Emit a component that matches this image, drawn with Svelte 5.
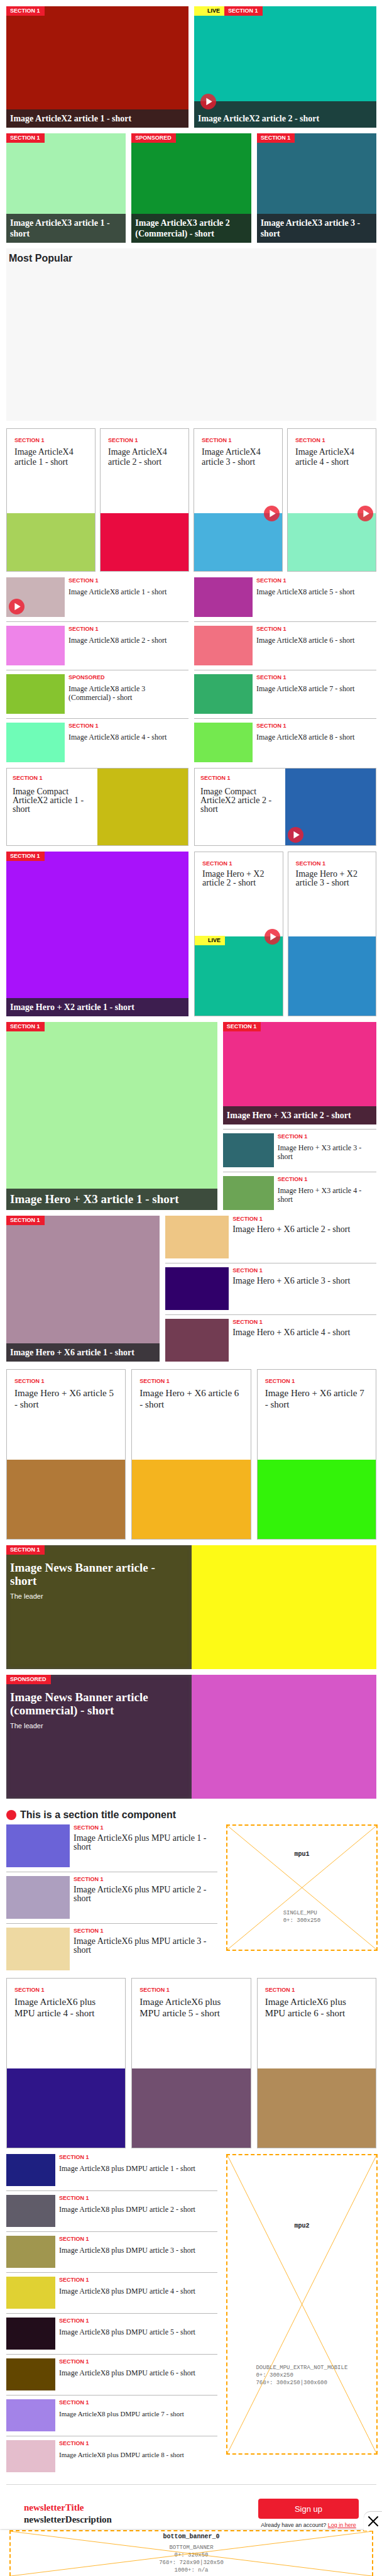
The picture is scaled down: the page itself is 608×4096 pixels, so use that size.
<script>
  const S = 'SECTION 1';
  const SP = 'SPONSORED';

  const x2 = [
    { tag: S, title: 'Image ArticleX2 article 1 - short', color: '#a31607' },
    { tag: S, title: 'Image ArticleX2 article 2 - short', color: '#07bda5', live: true, play: true }
  ];
  const x3 = [
    { tag: S, title: 'Image ArticleX3 article 1 - short', color: '#a6f2b0' },
    { tag: SP, title: 'Image ArticleX3 article 2 (Commercial) - short', color: '#0d942e' },
    { tag: S, title: 'Image ArticleX3 article 3 - short', color: '#276b7e' }
  ];
  const x4 = ['#a8d25a', '#e90b40', '#48b1dd', '#89efc3'].map((color, i) => ({
    tag: S, title: `Image ArticleX4 article ${i + 1} - short`, color, play: i > 1
  }));
  const x8 = ['#cab3b7', '#ee84e9', '#86c42f', '#6ffcb7', '#ad339b', '#f17181', '#32ad68', '#74e94f'].map(
    (color, i) => ({
      tag: i === 2 ? SP : S,
      title: `Image ArticleX8 article ${i + 1}${i === 2 ? ' (Commercial)' : ''} - short`,
      color,
      play: i === 0
    })
  );
  const compact = ['#c7bc14', '#2864ae'].map((color, i) => ({
    tag: S, title: `Image Compact ArticleX2 article ${i + 1} - short`, color, play: i === 1
  }));
  const heroX2 = ['#a812fa', '#0dbc95', '#2c8ac6'].map((color, i) => ({
    tag: S, title: `Image Hero + X2 article ${i + 1} - short`, color, play: i === 1, live: i === 1
  }));
  const heroX3 = ['#aaf2a1', '#ee2d89', '#2e6870', '#6ca455'].map((color, i) => ({
    tag: S, title: `Image Hero + X3 article ${i + 1} - short`, color
  }));
  const heroX6 = ['#ac8a9f', '#eec685', '#30006a', '#723c52', '#b17938', '#f4b41f', '#33f309'].map((color, i) => ({
    tag: S, title: `Image Hero + X6 article ${i + 1} - short`, color
  }));
  const banners = [
    { tag: S, title: 'Image News Banner article - short', color: '#fdfa16' },
    { tag: SP, title: 'Image News Banner article (commercial) - short', color: '#d657c8' }
  ];
  const mpu = ['#6b63d7', '#ad9fbf', '#eed9a2', '#2f1589', '#714f6f', '#b18b59'].map((color, i) => ({
    tag: S, title: `Image ArticleX6 plus MPU article ${i + 1} - short`, color
  }));
  const dmpu = ['#1e2081', '#605c69', '#a0964f', '#e0d133', '#220d1b', '#624600', '#a383e8', '#e4bdcc'].map(
    (color, i) => ({ tag: S, title: `Image ArticleX8 plus DMPU article ${i + 1} - short`, color, fine: i > 5 })
  );
</script>

{#snippet playIcon()}
  <svg class="play" viewBox="0 0 32 32" aria-hidden="true">
    <circle cx="16" cy="16" r="16" fill="#ed1c2e" fill-opacity="0.8" />
    <path d="M12 8.5 L24 16 L12 23.5 Z" fill="#fff" />
  </svg>
{/snippet}

{#snippet poster(a, cls = '')}
  <article class="poster {cls}" style:background-color={a.color}>
    <div class="badges">
      {#if a.live}<span class="badge live">LIVE</span>{/if}
      <span class="badge">{a.tag}</span>
    </div>
    <div class="caption" class:with-play={a.play}>
      {#if a.play}{@render playIcon()}{/if}
      <h3><a href="#article">{a.title}</a></h3>
    </div>
  </article>
{/snippet}

{#snippet card(a, cls = '')}
  <article class="card {cls}">
    <div class="card-body">
      <span class="kicker">{a.tag}</span>
      <h3><a href="#article">{a.title}</a></h3>
    </div>
    <div class="picture" style:background-color={a.color}>
      {#if a.live}<span class="badge live">LIVE</span>{/if}
      {#if a.play}{@render playIcon()}{/if}
    </div>
  </article>
{/snippet}

{#snippet row(a)}
  <li class="row" class:fine={a.fine}>
    <div class="thumb" style:background-color={a.color}>
      {#if a.play}{@render playIcon()}{/if}
    </div>
    <div class="row-body">
      <span class="kicker">{a.tag}</span>
      <h3><a href="#article">{a.title}</a></h3>
    </div>
  </li>
{/snippet}

{#snippet ad(name, lines, cls)}
  <aside class="ad {cls}">
    <svg class="cross" viewBox="0 0 100 100" preserveAspectRatio="none" aria-hidden="true">
      <path d="M0 0 L100 100 M100 0 L0 100" vector-effect="non-scaling-stroke" />
    </svg>
    <strong>{name}</strong>
    <div class="sizes">
      {#each lines as line}<div>{line}</div>{/each}
    </div>
  </aside>
{/snippet}

<main>
  <section class="cols two x2">
    {#each x2 as a}{@render poster(a)}{/each}
  </section>

  <section class="cols three x3">
    {#each x3 as a}{@render poster(a)}{/each}
  </section>

  <section class="popular">
    <h2>Most Popular</h2>
  </section>

  <section class="cols four roomy">
    {#each x4 as a}{@render card(a, 'small')}{/each}
  </section>

  <section class="cols two">
    <ul class="list x8">
      {#each x8.slice(0, 4) as a}{@render row(a)}{/each}
    </ul>
    <ul class="list x8">
      {#each x8.slice(4) as a}{@render row(a)}{/each}
    </ul>
  </section>

  <section class="cols two">
    {#each compact as a}
      <article class="compact">
        <div class="compact-body">
          <span class="kicker">{a.tag}</span>
          <h3><a href="#article">{a.title}</a></h3>
        </div>
        <div class="compact-picture" style:background-color={a.color}>
          {#if a.play}{@render playIcon()}{/if}
        </div>
      </article>
    {/each}
  </section>

  <section class="cols two hero-x2">
    {@render poster(heroX2[0])}
    <div class="pair">
      {@render card(heroX2[1], 'tight')}
      {@render card(heroX2[2], 'tight')}
    </div>
  </section>

  <section class="cols wide-left">
    {@render poster(heroX3[0], 'large')}
    <div class="stack">
      {@render poster(heroX3[1], 'top')}
      <ul class="list x3-list">
        {#each heroX3.slice(2) as a}{@render row(a)}{/each}
      </ul>
    </div>
  </section>

  <section class="cols wide-right">
    {@render poster(heroX6[0])}
    <ul class="list x6-list">
      {#each heroX6.slice(1, 4) as a}{@render row(a)}{/each}
    </ul>
  </section>

  <section class="cols three roomy">
    {#each heroX6.slice(4) as a}{@render card(a, 'medium')}{/each}
  </section>

  {#each banners as a}
    <article class="banner" style:background-color={a.color}>
      <div class="banner-text">
        <div class="badges"><span class="badge">{a.tag}</span></div>
        <div class="banner-copy">
          <h3><a href="#article">{a.title}</a></h3>
          <p>The leader</p>
        </div>
      </div>
    </article>
  {/each}

  <section class="titled">
    <h2 class="section-title"><span class="dot"></span>This is a section title component</h2>
    <div class="cols wide-left">
      <ul class="list x6-list">
        {#each mpu.slice(0, 3) as a}{@render row(a)}{/each}
      </ul>
      {@render ad('mpu1', ['SINGLE_MPU', '0+: 300x250'], 'single')}
    </div>
  </section>

  <section class="cols three roomy">
    {#each mpu.slice(3) as a}{@render card(a, 'medium')}{/each}
  </section>

  <section class="cols wide-left">
    <ul class="list dmpu-list">
      {#each dmpu as a}{@render row(a)}{/each}
    </ul>
    {@render ad('mpu2', ['DOUBLE_MPU_EXTRA_NOT_MOBILE', '0+: 300x250', '768+: 300x250|300x600'], 'double')}
  </section>

  <section class="newsletter">
    <div class="pitch">
      <div class="news-title">newsletterTitle</div>
      <div>newsletterDescription</div>
    </div>
    <div class="join">
      <button type="button" class="signup">Sign up</button>
      <p>Already have an account? <a href="#login">Log in here</a></p>
    </div>
  </section>
</main>

<footer>
  {@render ad('bottom_banner_0', ['BOTTOM_BANNER', '0+: 320x50', '768+: 728x90|320x50', '1000+: n/a'], 'bottom')}
  <button type="button" class="close" aria-label="Close">
    <svg viewBox="0 0 16 16" aria-hidden="true">
      <path d="M1 1 L15 15 M15 1 L1 15" fill="none" stroke="#000" stroke-width="2" stroke-linecap="round" />
    </svg>
  </button>
</footer>

<style>
  :global(body) {
    margin: 0;
    background: #fff;
    color: #222427;
    font-family: 'Liberation Sans', Arial, sans-serif;
  }

  main {
    display: flex;
    flex-direction: column;
    gap: 9px;
    padding: 10px 9px 0 10px;
  }

  h2,
  h3,
  p,
  ul {
    margin: 0;
    padding: 0;
  }

  ul {
    list-style: none;
  }

  h3 {
    font-family: 'Liberation Serif', 'Times New Roman', serif;
    font-size: 14px;
    line-height: 14px;
    font-weight: 400;
  }

  h3 a {
    color: inherit;
    text-decoration: none;
  }

  .cols {
    display: grid;
    gap: 9px;
  }

  .two {
    grid-template-columns: repeat(2, minmax(0, 1fr));
  }

  .three {
    grid-template-columns: repeat(3, minmax(0, 1fr));
  }

  .four {
    grid-template-columns: repeat(4, minmax(0, 1fr));
    gap: 7px;
  }

  .wide-left {
    grid-template-columns: minmax(0, 11fr) minmax(0, 8fr);
  }

  .wide-right {
    grid-template-columns: minmax(0, 8fr) minmax(0, 11fr);
  }

  .roomy {
    margin-top: 3px;
  }

  .play {
    position: absolute;
    display: block;
    width: 25px;
    height: 25px;
  }

  /* Labels */
  .badges {
    display: flex;
  }

  .badge {
    padding: 0 7px 0 6px;
    background: #ed1c2e;
    color: #fff;
    font-size: 9px;
    line-height: 15px;
    font-weight: 700;
  }

  .badge.live {
    padding-left: 21px;
    background: #ffff38;
    color: #000;
  }

  .kicker {
    display: block;
    color: #ed1c2e;
    font-size: 9px;
    line-height: 10px;
    font-weight: 700;
  }

  /* Full picture with a caption bar */
  .poster {
    display: flex;
    flex-direction: column;
    justify-content: space-between;
  }

  .x2 .poster {
    min-height: 193px;
  }

  .x3 .poster {
    min-height: 174px;
  }

  .poster.top {
    min-height: 163px;
  }

  .caption {
    position: relative;
    padding: 6px;
    background: rgba(34, 34, 36, 0.8);
    color: #fff;
  }

  .caption.with-play {
    padding-top: 19px;
  }

  .caption .play {
    top: -12px;
    left: 10px;
  }

  .caption h3 {
    line-height: 17px;
    font-weight: 700;
  }

  .large .caption h3 {
    font-size: 19px;
    line-height: 22px;
  }

  .popular {
    min-height: 274px;
    background: #f7f7f7;
  }

  .popular h2 {
    padding: 6px 4px;
    font-size: 16px;
    line-height: 20px;
  }

  /* Bordered card */
  .card {
    display: flex;
    flex-direction: column;
    border: 1px solid #b9b9b9;
  }

  .card-body {
    flex: 1;
    padding: 13px 12px;
  }

  .picture {
    position: relative;
    height: 126px;
  }

  .card h3 {
    margin-top: 5px;
  }

  .picture .badge {
    position: absolute;
    top: -1px;
    left: 0;
  }

  .picture .play {
    top: -12px;
    right: 4px;
  }

  .small .card-body {
    min-height: 108px;
  }

  .small .picture {
    height: 92px;
  }

  .small h3 {
    margin-top: 6px;
    line-height: 16px;
  }

  .medium .card-body {
    min-height: 117px;
  }

  .medium h3 {
    font-size: 15px;
    line-height: 18px;
  }

  .pair {
    display: grid;
    grid-template-columns: repeat(2, minmax(0, 1fr));
    gap: 7px;
  }

  .tight .card-body {
    min-height: 108px;
  }

  /* Thumbnail rows */
  .row {
    display: flex;
    gap: 6px;
  }

  .row + .row,
  .x3-list .row {
    margin-top: 7px;
    border-top: 1px solid #b9b9b9;
    padding-top: 6px;
  }

  .row-body {
    flex: 1;
    min-width: 0;
  }

  .row h3 {
    margin-top: 6px;
    font-size: 12px;
  }

  .thumb {
    position: relative;
    flex: none;
  }

  .thumb .play {
    left: 4px;
    bottom: 4px;
  }

  .x8 .thumb {
    width: 93px;
    height: 63px;
  }

  .x3-list .thumb {
    width: 81px;
    height: 54px;
  }

  .x6-list .thumb {
    width: 101px;
    height: 68px;
  }

  .x6-list .row h3 {
    margin-top: 5px;
    font-size: 14px;
  }

  .dmpu-list .thumb {
    width: 78px;
    height: 51px;
  }

  .row.fine h3 {
    font-size: 11px;
  }

  /* Half text, half picture */
  .compact {
    display: grid;
    grid-template-columns: repeat(2, minmax(0, 1fr));
    min-height: 122px;
    border: 1px solid #b9b9b9;
  }

  .compact-body {
    padding: 10px 9px;
  }

  .compact h3 {
    margin-top: 10px;
  }

  .compact-picture {
    position: relative;
  }

  .compact-picture .play {
    left: 4px;
    bottom: 4px;
  }

  /* News banner */
  .banner {
    display: flex;
    min-height: 197px;
  }

  .banner-text {
    width: 50%;
    background: rgba(34, 34, 36, 0.8);
    box-shadow: inset 0 0 6px rgba(74, 74, 74, 0.9);
    color: #fff;
  }

  .banner-copy {
    padding: 10px 30px 10px 6px;
  }

  .banner h3 {
    font-size: 19px;
    line-height: 21px;
    font-weight: 700;
  }

  .banner p {
    margin-top: 7px;
    font-size: 11px;
    line-height: 14px;
  }

  /* Titled section */
  .titled {
    padding-top: 9px;
  }

  .section-title {
    display: flex;
    align-items: center;
    gap: 6px;
    margin-bottom: 7px;
    font-size: 16px;
    line-height: 16px;
  }

  .dot {
    width: 16px;
    height: 16px;
    border-radius: 50%;
    background: #ed1c2e;
  }

  /* Advert slots */
  .ad {
    position: relative;
    display: flex;
    flex-direction: column;
    align-items: center;
    justify-content: space-around;
    align-self: start;
    box-sizing: border-box;
    margin: 0 -2px 0 5px;
    border: 2px dashed #ffa500;
    font-family: 'Liberation Mono', 'Courier New', monospace;
    font-size: 10px;
    line-height: 12px;
  }

  .cross {
    position: absolute;
    inset: 0;
    width: 100%;
    height: 100%;
  }

  .cross path {
    stroke: #ffa500;
    stroke-opacity: 0.8;
    stroke-width: 1;
  }

  .sizes {
    color: #6f6f6f;
    font-size: 9px;
  }

  .single {
    min-height: 201px;
  }

  .double {
    min-height: 478px;
  }

  .bottom {
    margin: -2px 14px 0 15px;
    min-height: 73px;
    border-bottom: 0;
    text-align: center;
  }

  /* Newsletter */
  .newsletter {
    display: flex;
    justify-content: space-between;
    box-sizing: border-box;
    min-height: 75px;
    margin-top: 10px;
    border-top: 1px solid #d6d6d6;
    padding: 22px 28px 0;
  }

  .pitch {
    padding-top: 5px;
    font-family: 'Liberation Serif', 'Times New Roman', serif;
    font-size: 15px;
    line-height: 19px;
    font-weight: 700;
  }

  .news-title {
    color: #ed1c2e;
  }

  .join {
    width: 160px;
    text-align: center;
  }

  .signup {
    display: block;
    width: 100%;
    height: 32px;
    padding: 0;
    border: 0;
    border-radius: 4px;
    background: #ed1c2e;
    color: #fff;
    font-family: inherit;
    font-size: 13px;
  }

  .join p {
    margin-top: 4px;
    font-size: 9px;
    line-height: 12px;
    white-space: nowrap;
  }

  .join a {
    color: #ed1c2e;
  }

  /* Bottom bar */
  footer {
    position: relative;
    background: #fff;
    box-shadow: 0 0 3px rgba(0, 0, 0, 0.3);
  }

  .close {
    position: absolute;
    right: 0;
    top: -29px;
    display: flex;
    align-items: center;
    justify-content: center;
    width: 29px;
    height: 30px;
    padding: 0;
    border: 0;
    border-radius: 10px 0 0 0;
    background: #fff;
    box-shadow: 0 -1px 1px rgba(0, 0, 0, 0.2);
  }

  .close svg {
    width: 16px;
    height: 16px;
  }
</style>
